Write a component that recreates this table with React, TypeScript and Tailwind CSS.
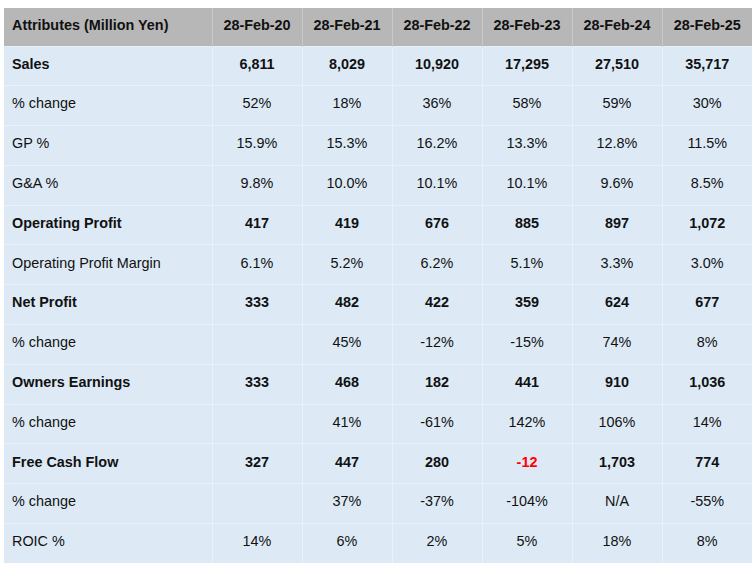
import React from "react";

type Row = { label: string; bold?: boolean; values: (string | { v: string; red: true })[] };

const headers = ["28-Feb-20", "28-Feb-21", "28-Feb-22", "28-Feb-23", "28-Feb-24", "28-Feb-25"];

const rows: Row[] = [
  { label: "Sales", bold: true, values: ["6,811", "8,029", "10,920", "17,295", "27,510", "35,717"] },
  { label: "% change", values: ["52%", "18%", "36%", "58%", "59%", "30%"] },
  { label: "GP %", values: ["15.9%", "15.3%", "16.2%", "13.3%", "12.8%", "11.5%"] },
  { label: "G&A %", values: ["9.8%", "10.0%", "10.1%", "10.1%", "9.6%", "8.5%"] },
  { label: "Operating Profit", bold: true, values: ["417", "419", "676", "885", "897", "1,072"] },
  { label: "Operating Profit Margin", values: ["6.1%", "5.2%", "6.2%", "5.1%", "3.3%", "3.0%"] },
  { label: "Net Profit", bold: true, values: ["333", "482", "422", "359", "624", "677"] },
  { label: "% change", values: ["", "45%", "-12%", "-15%", "74%", "8%"] },
  { label: "Owners Earnings", bold: true, values: ["333", "468", "182", "441", "910", "1,036"] },
  { label: "% change", values: ["", "41%", "-61%", "142%", "106%", "14%"] },
  { label: "Free Cash Flow", bold: true, values: ["327", "447", "280", { v: "-12", red: true }, "1,703", "774"] },
  { label: "% change", values: ["", "37%", "-37%", "-104%", "N/A", "-55%"] },
  { label: "ROIC %", values: ["14%", "6%", "2%", "5%", "18%", "8%"] },
];

export default function App() {
  return (
    <div className="w-[756px] h-[568px] bg-white pt-[8px] pl-[4px]" style={{ fontFamily: '"Liberation Sans", Arial, sans-serif' }}>
      <table className="border-collapse table-fixed w-[748px] text-[14.4px] text-[#111]">
        <colgroup>
          <col className="w-[208px]" />
          {headers.map((h) => (
            <col key={h} className="w-[90px]" />
          ))}
        </colgroup>
        <thead>
          <tr className="bg-[#b7b7b7] h-[38px]">
            <th className="text-left font-bold pl-[8px] pb-[2px] border-r border-[#c9c9c9]">Attributes (Million Yen)</th>
            {headers.map((h, i) => (
              <th key={h} className={`text-center font-bold pb-[2px] ${i < headers.length - 1 ? "border-r border-[#c9c9c9]" : ""}`}>
                {h}
              </th>
            ))}
          </tr>
        </thead>
        <tbody>
          {rows.map((r, ri) => (
            <tr key={ri} className="bg-[#ddeaf6] h-[39.8px]">
              <td className={`pl-[8px] pb-[3px] border-t border-r border-[#e9f1f9] ${r.bold ? "font-bold" : ""}`}>{r.label}</td>
              {r.values.map((v, i) => {
                const red = typeof v !== "string";
                const text = typeof v === "string" ? v : v.v;
                return (
                  <td
                    key={i}
                    className={`text-center pb-[3px] border-t border-[#e9f1f9] ${i < r.values.length - 1 ? "border-r" : ""} ${r.bold ? "font-bold" : ""} ${red ? "text-[#ff0000]" : ""}`}
                  >
                    {text}
                  </td>
                );
              })}
            </tr>
          ))}
        </tbody>
      </table>
    </div>
  );
}
